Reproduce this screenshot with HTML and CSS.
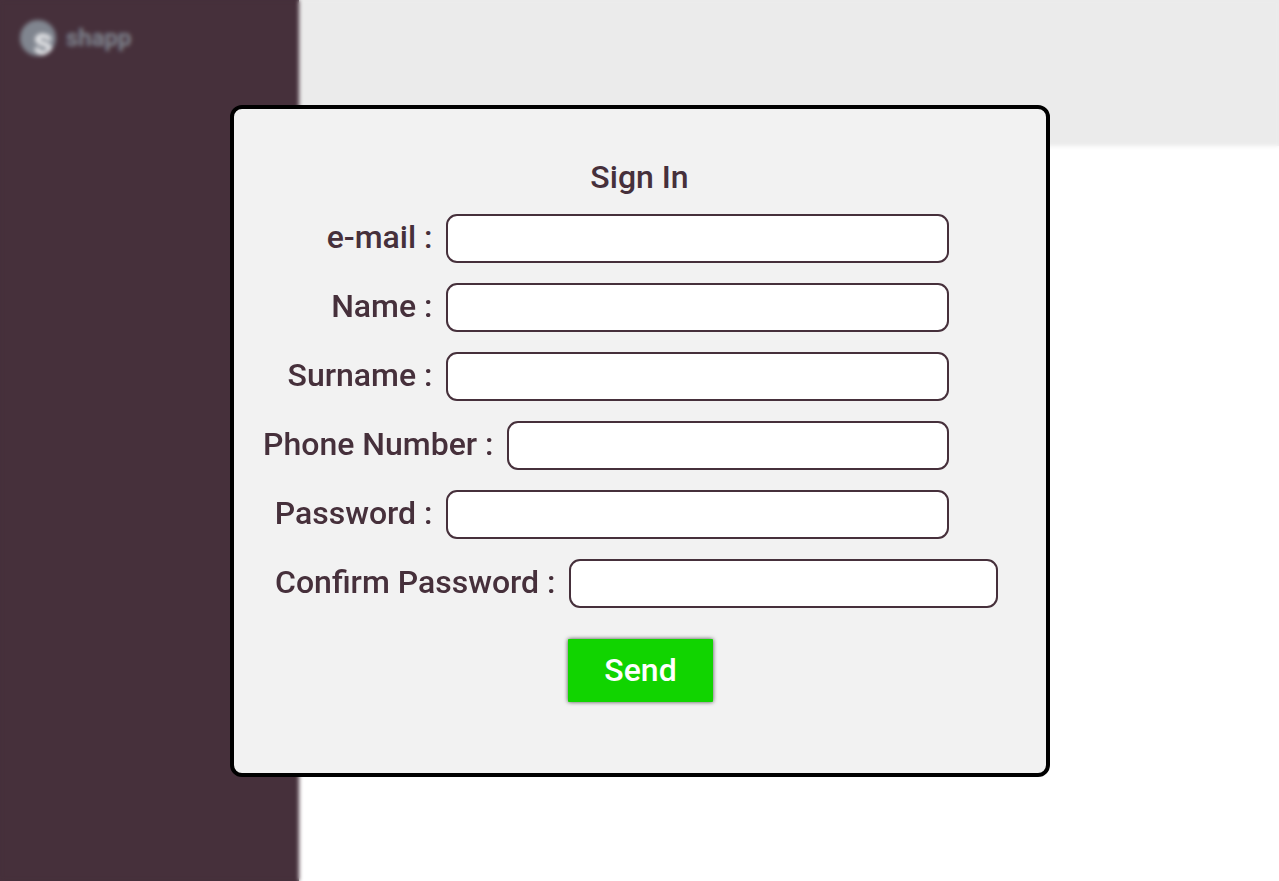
FILE: index.html
```html
<!DOCTYPE html>
<html lang="en">
<head>
  <meta charset="utf-8">
  <meta name="viewport" content="width=device-width, initial-scale=1">
  <title>shapp - Sign In</title>
  <link rel="stylesheet" href="styles.css">
</head>
<body>
  <div class="page">
    <aside class="sidebar">
      <a class="brand" href="#">
        <svg class="brand-mark" viewBox="0 0 36 36" aria-hidden="true">
          <defs>
            <clipPath id="disc"><circle cx="18" cy="18" r="18"/></clipPath>
          </defs>
          <circle cx="18" cy="18" r="18" fill="#80858f"/>
          <g clip-path="url(#disc)">
            <path d="M29.500 20.500C29 14.500 17.500 14.500 17.500 19.500C17.500 25 29.500 22.500 29.500 28.500C29.500 34.500 17 34.500 16.500 27.500" fill="none" stroke="#e2e3e6" stroke-width="5"/>
          </g>
        </svg>
        <span class="brand-name">shapp</span>
      </a>
    </aside>
    <div class="content">
      <header class="topbar"></header>
      <main class="main"></main>
    </div>
  </div>

  <div class="overlay">
    <form class="dialog" role="dialog" aria-labelledby="title">
      <h1 class="title" id="title">Sign In</h1>
      <div class="fields">
        <div class="field">
          <label class="label" for="email">e-mail :</label>
          <input class="input" id="email" type="email">
        </div>
        <div class="field">
          <label class="label" for="name">Name :</label>
          <input class="input" id="name" type="text">
        </div>
        <div class="field">
          <label class="label" for="surname">Surname :</label>
          <input class="input" id="surname" type="text">
        </div>
        <div class="field">
          <label class="label label-phone" for="phone">Phone Number :</label>
          <input class="input" id="phone" type="tel">
        </div>
        <div class="field">
          <label class="label" for="password">Password :</label>
          <input class="input" id="password" type="password">
        </div>
        <div class="field field-wide">
          <label class="label label-confirm" for="confirm">Confirm Password :</label>
          <input class="input" id="confirm" type="password">
        </div>
      </div>
      <button class="send" type="submit">Send</button>
    </form>
  </div>
</body>
</html>
```
FILE: styles.css
```css
*,
*::before,
*::after {
  box-sizing: border-box;
}

body {
  margin: 0;
  background: #fff;
  color: #46303b;
  font-family: Roboto, "Liberation Sans", sans-serif;
}

.page {
  display: flex;
  min-height: 100vh;
}

.sidebar {
  flex: 0 0 299px;
  padding: 20px;
  background: #46303b;
}

.brand {
  display: flex;
  align-items: center;
  gap: 10px;
  color: #80858f;
  text-decoration: none;
}

.brand-mark {
  width: 36px;
  height: 36px;
}

.brand-name {
  font-size: 24px;
  font-weight: 700;
  line-height: 36px;
}

.content {
  flex: 1;
}

.topbar {
  height: 146px;
  background: #ebebeb;
}

.overlay {
  position: fixed;
  inset: 0;
  display: grid;
  place-items: center;
  overflow: auto;
  backdrop-filter: blur(2px);
}

.dialog {
  display: flex;
  flex-direction: column;
  align-items: center;
  width: min(820px, 100%);
  padding: 48px 0 71px;
  border: 4px solid #000;
  border-radius: 12px;
  background: #f2f2f2;
}

.title {
  margin: 0 0 17px;
  font-size: 32px;
  font-weight: 500;
  line-height: 40px;
}

.fields {
  display: flex;
  flex-direction: column;
  gap: 20px;
  align-self: stretch;
}

.field {
  display: flex;
  align-items: center;
  gap: 13px;
  padding-right: 97px;
}

.field-wide {
  padding-right: 48px;
}

.label {
  flex: 0 0 199px;
  padding-bottom: 2px;
  font-size: 32px;
  font-weight: 500;
  line-height: 40px;
  text-align: right;
  white-space: nowrap;
}

.label-phone {
  flex-basis: 260px;
}

.label-confirm {
  flex-basis: 322px;
}

.input {
  flex: 1;
  min-width: 0;
  height: 49px;
  padding: 0 12px;
  border: 2px solid #46303b;
  border-radius: 11px;
  background: #fff;
  color: inherit;
  font: 500 24px Roboto, "Liberation Sans", sans-serif;
}

.send {
  margin: 31px 0 0 2px;
  padding: 11px 36px 12px;
  border: 0;
  border-radius: 1px;
  background: #11d400;
  box-shadow: 0 0 4px rgba(0, 0, 0, 0.7);
  color: #fff;
  font: 500 32px/40px Roboto, "Liberation Sans", sans-serif;
  cursor: pointer;
}
```
